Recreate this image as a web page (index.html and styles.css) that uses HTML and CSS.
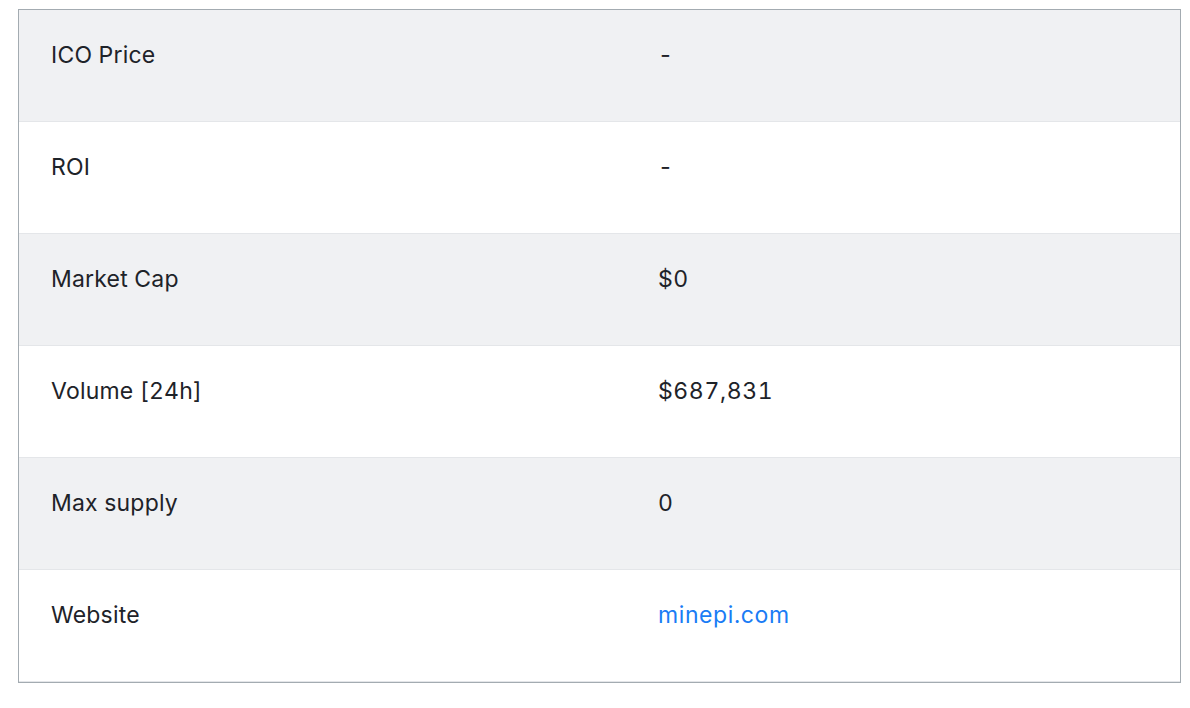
FILE: index.html
```html
<!DOCTYPE html>
<html>
<head>
<meta charset="utf-8">
<link rel="stylesheet" href="styles.css">
</head>
<body>
<div class="table">
  <div class="row shaded"><div class="label">ICO Price</div><div class="value">-</div></div>
  <div class="row"><div class="label">ROI</div><div class="value">-</div></div>
  <div class="row shaded"><div class="label">Market Cap</div><div class="value">$0</div></div>
  <div class="row"><div class="label">Volume [24h]</div><div class="value">$687,831</div></div>
  <div class="row shaded"><div class="label">Max supply</div><div class="value">0</div></div>
  <div class="row"><div class="label">Website</div><div class="value"><a class="link" href="#">minepi.com</a></div></div>
</div>
</body>
</html>
```
FILE: styles.css
```css
html, body {
  margin: 0;
  padding: 0;
  background: #ffffff;
}
body {
  font-family: "Inter", "Noto Sans", "Liberation Sans", sans-serif;
  color: #1e2329;
}
.table {
  margin: 9px 10px 0 18px;
  border: 1px solid #a3abb1;
  width: 1161px;
}
.row {
  display: grid;
  grid-template-columns: 639px 1fr;
  height: 111px;
  border-bottom: 1px solid #e4e6e9;
  box-sizing: content-box;
}
.row.shaded {
  background: #f0f1f3;
}
.label, .value {
  font-size: 23px;
  line-height: 30px;
  padding-top: 30px;
  font-weight: 400;
  letter-spacing: 0.2px;
  font-variant-numeric: tabular-nums;
}
.value {
  letter-spacing: 0.6px;
}
.label {
  padding-left: 32px;
}
.link {
  color: #1a7cf5;
  text-decoration: none;
}
```
